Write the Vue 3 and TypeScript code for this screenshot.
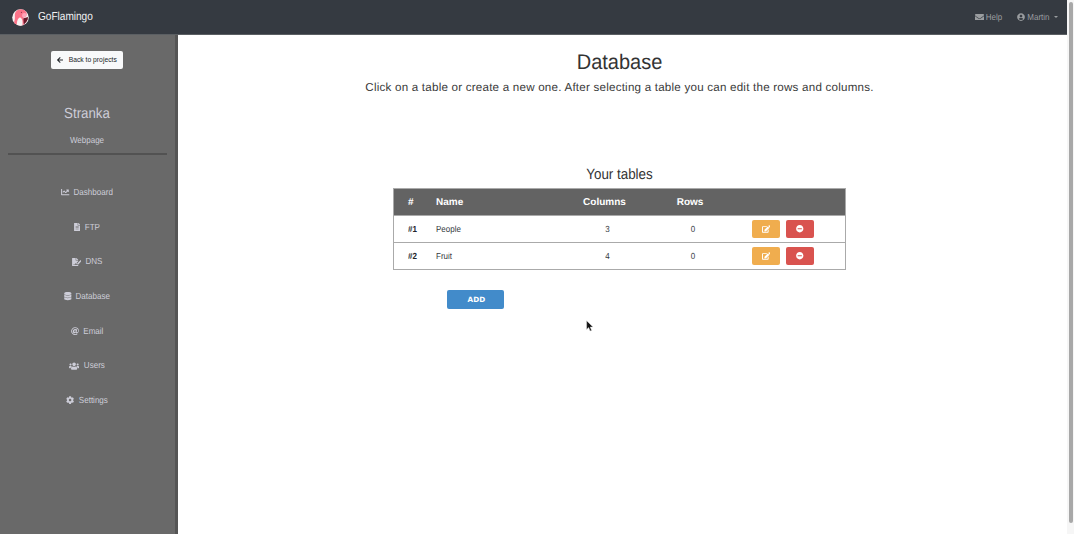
<script setup lang="ts">
interface Icon { w: number; h: number; d: string }
interface NavItem { label: string; icon: Icon; width: number; gap: number }
interface TableRow { id: number; name: string; columns: number; rows: number }

const icons: Record<string, Icon> = {
  chart: { w: 512, h: 512, d: 'M496 384H64V80c0-8.84-7.16-16-16-16H16C7.16 64 0 71.16 0 80v336c0 17.67 14.33 32 32 32h464c8.84 0 16-7.16 16-16v-32c0-8.84-7.16-16-16-16zM464 96H345.94c-21.38 0-32.09 25.85-16.97 40.97l32.4 32.4L288 242.75l-73.37-73.37c-12.5-12.5-32.76-12.5-45.25 0l-68.69 68.69c-6.25 6.25-6.25 16.38 0 22.63l22.62 22.62c6.25 6.25 16.38 6.25 22.63 0L192 237.25l73.37 73.37c12.5 12.5 32.76 12.5 45.25 0l96-96 32.4 32.4c15.12 15.12 40.97 4.41 40.97-16.97V112c.01-8.84-7.15-16-15.99-16z' },
  file: { w: 384, h: 512, d: 'M224 136V0H24C10.7 0 0 10.7 0 24v464c0 13.3 10.7 24 24 24h336c13.3 0 24-10.7 24-24V160H248c-13.2 0-24-10.8-24-24zm64 236c0 6.6-5.4 12-12 12H108c-6.6 0-12-5.4-12-12v-8c0-6.6 5.4-12 12-12h168c6.6 0 12 5.4 12 12v8zm0-64c0 6.6-5.4 12-12 12H108c-6.6 0-12-5.4-12-12v-8c0-6.6 5.4-12 12-12h168c6.6 0 12 5.4 12 12v8zm0-72v8c0 6.6-5.4 12-12 12H108c-6.6 0-12-5.4-12-12v-8c0-6.6 5.4-12 12-12h168c6.6 0 12 5.4 12 12zm96-114.100v6.100H256V0h6.100c6.400 0 12.500 2.500 17 7l97.900 98c4.500 4.500 7 10.600 7 16.900z' },
  sign: { w: 576, h: 512, d: 'M218 424c-3-7-14-8-18-1-5 9-13 14-23 14H80v-32h97l19-57c7-19 31-19 38 0l14 42c11-6 26-4 35 5l5-5v-89L384 206v-46H248c-13 0-24-11-24-24V0H24C11 0 0 11 0 24v464c0 13 11 24 24 24h336c13 0 24-11 24-24v-51h-96c-32 0-57-1-70-13zM384 122c0-6-3-12-7-17L279 7c-5-5-11-7-17-7h-6v128h128zM320 337v68h68l162-163-68-68zM568 167l-25-25c-10-10-25-10-35 0l-28 28 60 60 28-28c10-10 10-25 0-35z' },
  database: { w: 448, h: 512, d: 'M448 73.143v45.714C448 159.143 347.667 192 224 192S0 159.143 0 118.857V73.143C0 32.857 100.333 0 224 0s224 32.857 224 73.143zM448 176v102.857C448 319.143 347.667 352 224 352S0 319.143 0 278.857V176c48.125 33.143 136.208 48.572 224 48.572S399.874 209.143 448 176zm0 160v102.857C448 479.143 347.667 512 224 512S0 479.143 0 438.857V336c48.125 33.143 136.208 48.572 224 48.572S399.874 369.143 448 336z' },
  at: { w: 512, h: 512, d: 'M256 8C118.941 8 8 118.919 8 256c0 137.058 110.919 248 248 248 52.925 0 104.68-17.078 147.092-48.319 5.501-4.052 6.423-11.924 2.095-17.211l-20.253-24.745c-3.98-4.863-11.051-5.775-16.129-2.034C336.177 435.693 296.576 448.441 256 448.441c-106.126 0-192.441-86.315-192.441-192.441S149.874 63.559 256 63.559c104.498 0 192 58.5 192 168.441 0 66-40 100-75 100-19 0-20-13-16-32l30-152c1-8-4-15-12-15h-45c-6 0-11 5-12 11l-1 5c-17-18-41-22-62-22-76 0-141 64-141 157 0 63 37 106 98 106 31 0 62-16 81-40 5 29 32 38 67 38 82 0 126-76 126-156C504 95.83 390.155 8 256 8zm-21 306c-23 0-37-16-37-41 0-47 33-76 66-76 25 0 38 16 38 41 0 45-34 76-67 76z' },
  users: { w: 640, h: 512, d: 'M96 224c35.300 0 64-28.700 64-64s-28.700-64-64-64-64 28.700-64 64 28.700 64 64 64zm448 0c35.300 0 64-28.700 64-64s-28.700-64-64-64-64 28.700-64 64 28.700 64 64 64zm32 32h-64c-17.600 0-33.500 7.100-45.100 18.600 40.300 22.100 68.900 62 75.100 109.400h66c17.700 0 32-14.300 32-32v-32c0-35.300-28.700-64-64-64zm-256 0c61.900 0 112-50.100 112-112S381.900 32 320 32 208 82.100 208 144s50.100 112 112 112zm76.800 32h-8.300c-20.800 10-43.900 16-68.500 16s-47.600-6-68.500-16h-8.300C179.600 288 128 339.600 128 403.200V432c0 26.500 21.500 48 48 48h288c26.500 0 48-21.500 48-48v-28.800c0-63.600-51.600-115.200-115.200-115.200zm-223.700-13.400C161.500 263.100 145.600 256 128 256H64c-35.300 0-64 28.700-64 64v32c0 17.700 14.300 32 32 32h65.900c6.300-47.400 34.900-87.300 75.200-109.400z' },
  cog: { w: 512, h: 512, d: 'M487.400 315.700l-42.600-24.600c4.300-23.200 4.300-47 0-70.200l42.600-24.600c4.900-2.800 7.100-8.600 5.500-14-11.100-35.600-30-67.800-54.700-94.600-3.800-4.100-10-5.100-14.800-2.300L380.800 110c-17.900-15.400-38.500-27.300-60.800-35.100V25.800c0-5.600-3.900-10.500-9.400-11.700-36.700-8.200-74.300-7.800-109.200 0-5.500 1.200-9.400 6.100-9.400 11.700V75c-22.200 7.900-42.800 19.800-60.800 35.100L88.700 85.500c-4.900-2.800-11-1.900-14.800 2.300-24.700 26.700-43.600 58.900-54.700 94.600-1.700 5.400.6 11.200 5.500 14L67.300 221c-4.300 23.200-4.300 47 0 70.200l-42.600 24.600c-4.900 2.800-7.100 8.600-5.500 14 11.100 35.600 30 67.800 54.700 94.600 3.800 4.100 10 5.100 14.800 2.300l42.600-24.600c17.900 15.400 38.500 27.300 60.800 35.100v49.200c0 5.600 3.900 10.500 9.400 11.700 36.700 8.200 74.300 7.800 109.200 0 5.500-1.200 9.400-6.100 9.400-11.700v-49.200c22.200-7.900 42.800-19.800 60.800-35.100l42.600 24.600c4.900 2.800 11 1.900 14.800-2.300 24.700-26.700 43.600-58.900 54.700-94.600 1.500-5.500-.7-11.300-5.600-14.100zM256 336c-44.100 0-80-35.900-80-80s35.900-80 80-80 80 35.900 80 80-35.900 80-80 80z' },
  envelope: { w: 512, h: 384, d: 'M502.300 126.800c3.900-3.100 9.700-.2 9.700 4.700V336c0 26.500-21.500 48-48 48H48c-26.500 0-48-21.500-48-48V131.600c0-5 5.700-7.800 9.700-4.700 22.400 17.400 52.100 39.500 154.100 113.600 21.100 15.400 56.700 47.800 92.200 47.600 35.700.3 72-32.800 92.300-47.600 102-74.100 131.600-96.300 154-113.700zM256 256c23.200.4 56.600-29.200 73.400-41.400 132.700-96.300 142.800-104.700 173.400-128.700 5.800-4.500 9.200-11.500 9.200-18.900V48c0-26.500-21.500-48-48-48H48C21.500 0 0 21.500 0 48v19c0 7.400 3.400 14.300 9.200 18.900 30.600 23.900 40.700 32.400 173.400 128.700 16.800 12.200 50.200 41.800 73.400 41.400z' },
  user: { w: 496, h: 512, d: 'M248 8C111 8 0 119 0 256s111 248 248 248 248-111 248-248S385 8 248 8zm0 96c48.600 0 88 39.400 88 88s-39.400 88-88 88-88-39.400-88-88 39.400-88 88-88zm0 344c-58.700 0-111.300-26.600-146.500-68.200 18.800-35.400 55.600-59.800 98.500-59.800 2.400 0 4.800.4 7.100 1.100 13 4.200 26.600 6.900 40.900 6.900 14.300 0 28-2.700 40.900-6.900 2.300-.7 4.700-1.100 7.100-1.100 42.900 0 79.700 24.400 98.500 59.800C359.300 421.400 306.700 448 248 448z' },
  back: { w: 448, h: 448, d: 'M257.500 413.900l-22.200 22.200c-9.400 9.400-24.600 9.400-33.900 0L7 241.800c-9.400-9.400-9.400-24.600 0-33.900L201.400 13.400c9.400-9.400 24.600-9.400 33.900 0l22.200 22.200c9.500 9.500 9.300 25-.4 34.300L136.600 184.800H424c13.300 0 24 10.700 24 24v32c0 13.300-10.700 24-24 24H136.600l120.500 114.800c9.800 9.300 10 24.800.4 34.300z' },
  edit: { w: 576, h: 512, d: 'M402.600 83.200l90.200 90.200c3.800 3.800 3.800 10 0 13.800L274.400 405.600l-92.800 10.300c-12.400 1.400-22.900-9.100-21.500-21.500l10.300-92.800L388.800 83.200c3.800-3.800 10-3.800 13.800 0zm162-22.900l-48.800-48.800c-15.200-15.200-39.900-15.200-55.200 0l-35.400 35.400c-3.800 3.800-3.800 10 0 13.800l90.200 90.200c3.800 3.800 10 3.800 13.800 0l35.400-35.400c15.200-15.300 15.200-40 0-55.200zM384 346.200V448H64V128h229.800c3.200 0 6.200-1.300 8.500-3.500l40-40c7.600-7.600 2.200-20.500-8.500-20.500H48C21.500 64 0 85.500 0 112v352c0 26.500 21.500 48 48 48h352c26.500 0 48-21.500 48-48V306.200c0-10.700-12.900-16-20.500-8.500l-40 40c-2.200 2.300-3.500 5.300-3.500 8.500z' },
  minus: { w: 512, h: 512, d: 'M256 8C119 8 8 119 8 256s111 248 248 248 248-111 248-248S393 8 256 8zM124 296c-6.600 0-12-5.400-12-12v-56c0-6.600 5.400-12 12-12h264c6.600 0 12 5.400 12 12v56c0 6.600-5.400 12-12 12H124z' },
}

const nav: NavItem[] = [
  { label: 'Dashboard', icon: icons.chart, width: 8.4, gap: 4 },
  { label: 'FTP', icon: icons.file, width: 6.3, gap: 4.5 },
  { label: 'DNS', icon: icons.sign, width: 9.4, gap: 4.5 },
  { label: 'Database', icon: icons.database, width: 7.6, gap: 4 },
  { label: 'Email', icon: icons.at, width: 8.2, gap: 4.5 },
  { label: 'Users', icon: icons.users, width: 10.2, gap: 4.5 },
  { label: 'Settings', icon: icons.cog, width: 8.2, gap: 4.5 },
]

const tables: TableRow[] = [
  { id: 1, name: 'People', columns: 3, rows: 0 },
  { id: 2, name: 'Fruit', columns: 4, rows: 0 },
]

const box = (i: Icon): string => `0 0 ${i.w} ${i.h}`
</script>

<template>
  <div class="page">
    <div class="app">
      <header class="topbar">
        <svg class="logo" viewBox="0 0 36 36">
          <defs><clipPath id="disc"><circle cx="18" cy="18" r="17.500" /></clipPath></defs>
          <g clip-path="url(#disc)">
            <rect width="36" height="36" fill="#f6f0f0" />
            <path d="M23 20L34 17C34 24 30 29 25 33L22 27Z" fill="#6b1a2b" />
            <path d="M2 32C7 25 6 19 6 12C7 4 13 0 20 0C27 0 30 4 31 9C32 14 29 18 24 18L25 35H8Z" fill="#fb7288" />
            <path d="M10 36C10 27 12 19 17 18C22 19 23 27 22 36Z" fill="#f8f3f3" />
            <path d="M22 10C26 7 31 9 31 13C30 17 26 19 21 16Z" fill="#ffa3b8" />
            <circle cx="20" cy="7" r="1.300" fill="#8c3148" />
          </g>
        </svg>
        <span class="brand">GoFlamingo</span>
        <div class="account">
          <svg class="mail" :viewBox="box(icons.envelope)"><path :d="icons.envelope.d" /></svg>
          <span class="help">Help</span>
          <svg class="avatar" :viewBox="box(icons.user)"><path :d="icons.user.d" /></svg>
          <span class="user">Martin</span>
          <i class="caret"></i>
        </div>
      </header>
      <div class="body">
        <aside class="sidebar">
          <button class="back">
            <svg :viewBox="box(icons.back)"><path :d="icons.back.d" /></svg>
            <span>Back to projects</span>
          </button>
          <h2>Stranka</h2>
          <p class="kind">Webpage</p>
          <hr />
          <nav>
            <a v-for="item in nav" :key="item.label">
              <svg :viewBox="box(item.icon)" :style="{ width: item.width + 'px', marginRight: item.gap + 'px' }"><path :d="item.icon.d" /></svg>
              <span>{{ item.label }}</span>
            </a>
          </nav>
        </aside>
        <main>
          <h1>Database</h1>
          <p class="lead">Click on a table or create a new one. After selecting a table you can edit the rows and columns.</p>
          <h3>Your tables</h3>
          <div class="table">
            <div class="row head">
              <span>#</span><span>Name</span><span class="mid">Columns</span><span class="mid">Rows</span>
            </div>
            <div v-for="t in tables" :key="t.id" class="row">
              <b>#{{ t.id }}</b><span>{{ t.name }}</span>
              <span class="mid num">{{ t.columns }}</span><span class="mid num">{{ t.rows }}</span>
              <div class="actions">
                <button class="edit"><svg :viewBox="box(icons.edit)"><path :d="icons.edit.d" /></svg></button>
                <button class="remove"><svg :viewBox="box(icons.minus)"><path :d="icons.minus.d" /></svg></button>
              </div>
            </div>
          </div>
          <button class="add">ADD</button>
        </main>
      </div>
    </div>
    <div class="scroll"><div class="thumb"></div></div>
    <svg class="cursor" viewBox="0 0 12 19"><path d="M1 1V15L4.300 12L6.500 17.500L9 16.500L6.700 11.200H11.200Z" /></svg>
  </div>
</template>

<style>
body { margin: 0; overflow: hidden; background: #fff; }
</style>

<style scoped>
.page { display: flex; position: relative; width: 1074px; height: 534px; font-family: "Liberation Sans", Arial, sans-serif; font-size: 8px; color: #343a40; overflow: hidden; text-rendering: geometricPrecision; }
* { box-sizing: border-box; }
svg { display: block; flex: none; fill: currentColor; }
button { border: 0; padding: 0; display: flex; align-items: center; justify-content: center; font-family: inherit; }
h1, h2, h3, p { margin: 0; font-weight: 400; white-space: nowrap; }
.brand, .help, .user, .back span, h2, .kind, nav a span, h3, .row > b, .row > span { transform: scaleY(1.1); }
.app { width: 1067px; display: flex; flex-direction: column; }
.topbar { height: 35px; flex: none; display: flex; align-items: center; padding: 0 9px 0 12px; background: #353a41; border-bottom: 1px solid #5b5f63; }
.logo { width: 17px; height: 17px; }
.brand { margin: 2px 0 0 9px; font-size: 10.100px; line-height: 14px; color: #f2f2f3; letter-spacing: -.02px; transform: scaleY(1.15); }
.account { margin-left: auto; display: flex; align-items: center; color: #9a9da0; font-size: 8px; }
.mail { width: 9px; height: 6.800px; margin-right: 1.500px; }
.avatar { width: 8px; height: 8px; margin: 0 2.500px 0 14.500px; }
.caret { margin-left: 4.500px; border: 2.300px solid transparent; border-top-color: currentColor; border-bottom: 0; }
.body { flex: 1; display: flex; }
.sidebar { width: 178px; flex: none; background: #696969; border-right: 3px solid #555; display: flex; flex-direction: column; align-items: center; color: #cdcdd8; padding: 16px 1px 0 0; }
.back { width: 72px; height: 18px; background: #f8f9fa; color: #212529; border-radius: 2px; font-size: 6.750px; }
.back span { margin-top: -1px; }
.back svg { width: 6px; height: 6px; margin-right: 5.500px; }
.sidebar h2 { margin-top: 37px; font-size: 13.300px; line-height: 16px; }
.kind { margin-top: 12.500px; line-height: 12px; font-size: 8px; }
.sidebar hr { width: 159px; height: 2px; border: 0; background: #525252; margin: 6.500px 0 0; }
nav { margin-top: 20px; display: flex; flex-direction: column; }
nav a { height: 34.700px; display: flex; align-items: center; justify-content: center; font-size: 8.050px; }
nav svg { height: 8.200px; }
main { flex: 1; display: flex; flex-direction: column; align-items: center; padding: 15px 6px 0 0; }
h1 { font-size: 20px; line-height: 26px; color: #333; transform: scaleY(1.06); }
.lead { margin-top: 5px; font-size: 11.600px; letter-spacing: .22px; line-height: 14px; color: #3a3a3a; }
h3 { margin-top: 72px; font-size: 13.400px; line-height: 16px; color: #333; }
.table { margin-top: 5px; width: 453px; border: 1px solid #aaa; }
.row { height: 27px; display: grid; grid-template-columns: 42px 130px 77px 94px 1fr; align-items: center; border-top: 1px solid #aaa; }
.row.head { height: 26px; border: 0; background: #636363; color: #fff; font-weight: 700; font-size: 10px; }
.row > :first-child { padding-left: 14px; }
.row b { font-size: 8px; color: #212529; }
.row.head > span { transform: none; padding-top: 1px; }
.mid { text-align: center; }
.num { padding-left: 6px; }
.actions { display: flex; gap: 6px; padding-left: 15px; }
.actions button { width: 28px; height: 18px; border-radius: 2px; color: #fff; background: #f0ad4e; }
.actions .remove { background: #d9534f; }
.edit svg { width: 8.500px; height: 8px; }
.remove svg { width: 7.500px; height: 7.500px; }
.add { align-self: flex-start; margin: 20px 0 0 269px; width: 57px; height: 19px; background: #428bca; color: #fff; border-radius: 2px; font: 700 7.200px "DejaVu Sans", sans-serif; letter-spacing: .15px; padding-left: 2px; }
.scroll { width: 7px; background: #f6f6f6; padding: 2px 1.500px 0 2px; }
.thumb { height: 521px; border-radius: 2px; background: #a8a8a8; }
.cursor { position: absolute; left: 586px; top: 320px; width: 7.500px; height: 12px; fill: #111; stroke: #ddd; stroke-width: .8; }
</style>
